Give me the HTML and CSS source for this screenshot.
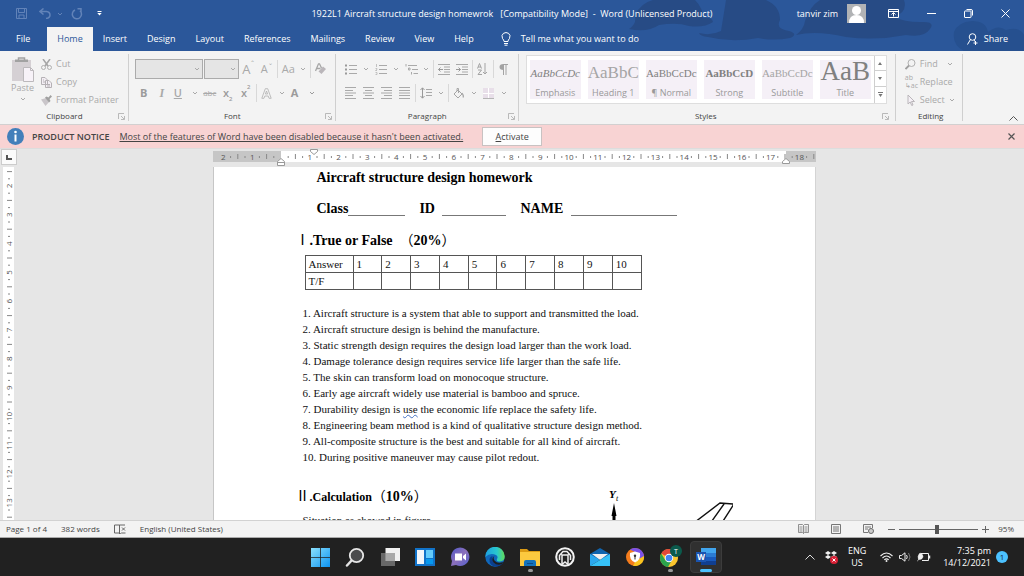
FILE: index.html
```
<!DOCTYPE html>
<html lang="en">

<head>
    <meta charset="utf-8">
    <title>1922L1 Aircraft structure design homewrok - Word</title>
    <link rel="stylesheet" href="styles.css">
</head>

<body>
    <svg class="symbols" aria-hidden="true">
        <symbol id="chev" viewBox="0 0 6 4"><path d="M1 1l2 2 2-2" fill="none" stroke="currentColor" /></symbol>
        <symbol id="launch" viewBox="0 0 7 7"><path d="M.5 6V.5H6M3 3l3 3M6.5 3v3.500H3" fill="none" stroke="currentColor" stroke-width=".8" /></symbol>
    </svg>

    <header class="top">
        <svg class="clouds" viewBox="0 0 400 51" aria-hidden="true">
            <path d="M5 29q8-5 6-14 6-12 18-15h42q8 8 8 18 9-1 10 4-9 6-24 4-12-4-30-1-12 8-30 4zM75 33q12 3 22-2 2-12 5-31h40q14 6 14 20-5 9 9 11 10 3 1 7-16 3-32 0-26 5-50-1-8-1-9-4zM172 35q8-6 9-14 5-15 15-21h84q4 12-10 17 10 5 26 5 16-1 10 7-6 9-24 6-30 6-60 2-30-7-50-2z" fill="#274b85" />
            <path d="M340 51q-12-6-10-19 4-10 18-11 14 0 16 11 10-8 18-2 14-4 18 5v16z" fill="#26508f" />
        </svg>
        <div class="titlebar">
            <div class="quick">
                <button aria-label="Save"><svg width="11" height="11" viewBox="0 0 11 11"><path d="M.5.5h10v10h-10zM2.500.5v4h6v-4M3 10.500V7h5v3.500" fill="none" stroke="currentColor" /></svg></button>
                <button aria-label="Undo"><svg width="12" height="11" viewBox="0 0 12 11"><path d="M4.500.5L1 3.500l3.500 3M1 3.500h6.500q3.500.500 3.500 3.500t-4 3.500" fill="none" stroke="currentColor" stroke-width="1.500" /></svg></button>
                <svg class="chev" width="6" height="4"><use href="#chev" /></svg>
                <button aria-label="Redo"><svg width="12" height="12" viewBox="0 0 12 12"><path d="M4 2a4.600 4.600 0 1 0 5 .8M6.500.8H10v3.500" fill="none" stroke="currentColor" stroke-width="1.500" /></svg></button>
                <button class="customize" aria-label="Customize toolbar"><svg width="5" height="5" viewBox="0 0 5 5"><path d="M.5 0h4v1h-4zM.3 2h4.400L2.500 4.500z" fill="currentColor" /></svg></button>
            </div>
            <h1 class="doc-name">1922L1 Aircraft structure design homewrok &nbsp; [Compatibility Mode] &nbsp;-&nbsp; Word (Unlicensed Product)</h1>
            <div class="account">
                <span>tanvir zim</span>
                <svg class="avatar" width="19" height="19" viewBox="0 0 19 19"><path d="M0 0h19v19H0z" fill="#b1b3b5" /><circle cx="9.500" cy="6.500" r="4.500" fill="#fff" /><path d="M2 19q0-8 7.500-8t7.500 8z" fill="#fff" /></svg>
                <button aria-label="Ribbon display"><svg width="11" height="9" viewBox="0 0 11 9"><path d="M.5.5h10v8H.5zM.5 2.500h10M5.500 7.500V4M3.500 5.500l2-2 2 2" fill="none" stroke="currentColor" /></svg></button>
                <button aria-label="Minimize"><svg width="9" height="9" viewBox="0 0 9 9"><path d="M0 4.500h9" stroke="currentColor" /></svg></button>
                <button aria-label="Restore"><svg width="9" height="9" viewBox="0 0 9 9"><path d="M.5 2.500q0-.5.500-.5h5.500q.5 0 .5.500v5.500q0 .5-.5.500H1q-.5 0-.5-.5zM2.500.5h4.500q1.500 0 1.500 1.500v4.500" fill="none" stroke="currentColor" /></svg></button>
                <button aria-label="Close"><svg width="9" height="9" viewBox="0 0 9 9"><path d="M.5.5l8 8M8.500.5l-8 8" stroke="currentColor" /></svg></button>
            </div>
        </div>
        <nav class="tabs">
            <button>File</button>
            <button class="active">Home</button>
            <button>Insert</button>
            <button>Design</button>
            <button>Layout</button>
            <button>References</button>
            <button>Mailings</button>
            <button>Review</button>
            <button>View</button>
            <button>Help</button>
            <button class="tell"><svg width="10" height="14" viewBox="0 0 10 14"><path d="M3 9.500Q3 8 1.500 6.500 0 3 2.500 1.300 5-.2 7.500 1.300 10 3 8.500 6.500 7 8 7 9.500zM3 11.500h4M3.500 13.200h3" fill="none" stroke="currentColor" /></svg>Tell me what you want to do</button>
            <button class="share"><svg width="11" height="12" viewBox="0 0 11 12"><circle cx="5.500" cy="4" r="3.300" fill="none" stroke="currentColor" /><path d="M3.500 6.500L.5 11.500M7 7l1.500 2M8.500 8v4M6.500 10h4" fill="none" stroke="currentColor" /></svg>Share</button>
        </nav>
    </header>

    <section class="ribbon">
        <div class="group">
            <div class="clipboard">
                <button class="paste">
                    <svg width="23" height="25" viewBox="0 0 23 25"><path d="M1 3h19v21H1z" fill="#d5d0d4" /><path d="M4 2.500h13V5H4z" fill="#a2a2a2" /><path d="M7.500 3V1h6v2" fill="none" stroke="#a2a2a2" stroke-width="1.500" /><path d="M12.500 10.500h7l3 3v11h-10z" fill="#f7f2f8" stroke="#bcb9bc" /><path d="M19.500 10.500v3h3" fill="none" stroke="#bcb9bc" /></svg>
                    Paste
                    <svg class="chev" width="6" height="4"><use href="#chev" /></svg>
                </button>
                <div class="commands">
                    <button><svg width="11" height="11" viewBox="0 0 11 11"><path d="M2 0l5 7M9 0L4 7" stroke="#a6a6a6" stroke-width="1.500" /><circle cx="2.500" cy="8.500" r="2" fill="none" stroke="#b0b0b0" /><circle cx="8.500" cy="8.500" r="2" fill="none" stroke="#b0b0b0" /></svg>Cut</button>
                    <button><svg width="11" height="11" viewBox="0 0 11 11"><path d="M.5.5H4L6.500 3v4.500h-6zM4.500 3.500H8L10.500 6v4.500h-6zM2 3h1M2 5h2M6 7.500h3M6 9h3" fill="#f3eef4" stroke="#b5b1b5" /></svg>Copy</button>
                    <button><svg width="11" height="11" viewBox="0 0 11 11"><path d="M0 4.500L5 3l3 4-3.500 4z" fill="#c9c5c9" /><path d="M4 2.500l4 5 1.500-1.500-1-2L11 1.500 9.500 0 7.500 2.500 5.500 1.500z" fill="#a0a0a0" /></svg>Format Painter</button>
                </div>
            </div>
            <div class="group-name">Clipboard<svg class="launch" width="7" height="7"><use href="#launch" /></svg></div>
        </div>

        <div class="group">
            <div class="rows">
                <div class="row">
                    <span class="combo font-name"><select aria-label="Font"><option></option></select><svg width="6" height="4"><use href="#chev" /></svg></span>
                    <span class="combo font-size"><select aria-label="Font size"><option></option></select><svg width="6" height="4"><use href="#chev" /></svg></span>
                    <button class="tool big" aria-label="Grow font">A<sup>&#8963;</sup></button>
                    <button class="tool" aria-label="Shrink font">A<sup>&#8964;</sup></button>
                    <i class="sep"></i>
                    <button class="tool menu"><span>Aa</span><svg width="6" height="4"><use href="#chev" /></svg></button>
                    <i class="sep"></i>
                    <button class="tool" aria-label="Clear formatting"><svg width="11" height="12" viewBox="0 0 11 12"><path d="M.5 8L3.500.8h1L6.500 5M1.500 5.500h4" fill="none" stroke="#a6a6a6" stroke-width="1.300" /><path d="M3.500 8.500L8 3.500 11 6l-4.500 5z" fill="#bab6ba" /></svg></button>
                </div>
                <div class="row">
                    <button class="tool bold">B</button>
                    <button class="tool italic">I</button>
                    <button class="tool menu under"><span>U</span><svg width="6" height="4"><use href="#chev" /></svg></button>
                    <button class="tool strike">abc</button>
                    <button class="tool script">x<sub>2</sub></button>
                    <button class="tool script">x<sup>2</sup></button>
                    <i class="sep"></i>
                    <button class="tool menu" aria-label="Text effects"><svg width="11" height="11" viewBox="0 0 11 11"><path d="M.8 10.300L4.300.7h2.400l3.500 9.600H8L7.200 8H3.800L3 10.300zM4.400 6h2.200L5.500 3z" fill="#f3f3f3" stroke="#b0b0b0" stroke-width=".8" /></svg><svg width="6" height="4"><use href="#chev" /></svg></button>
                    <button class="tool menu bold"><span>A</span><svg width="6" height="4"><use href="#chev" /></svg></button>
                </div>
            </div>
            <div class="group-name">Font<svg class="launch" width="7" height="7"><use href="#launch" /></svg></div>
        </div>

        <div class="group">
            <div class="rows">
                <div class="row">
                    <button class="tool menu" aria-label="Bullets"><svg width="12" height="11" viewBox="0 0 12 11"><path d="M0 .5h2v2H0zM0 4.500h2v2H0zM0 8.500h2v2H0z" fill="#999" /><path d="M4 1.500h8M4 5.500h8M4 9.500h8" stroke="currentColor" /></svg><svg width="6" height="4"><use href="#chev" /></svg></button>
                    <button class="tool menu" aria-label="Numbering"><svg width="12" height="11" viewBox="0 0 12 11"><path d="M1.500 0v3M.5 4.500H2v1L.5 6.500H2M.5 8.500H2v2H.5" fill="none" stroke="#b5b5b5" stroke-width=".8" /><path d="M4 1.500h8M4 5.500h8M4 9.500h8" stroke="currentColor" /></svg><svg width="6" height="4"><use href="#chev" /></svg></button>
                    <button class="tool menu" aria-label="Multilevel list"><svg width="13" height="11" viewBox="0 0 13 11"><path d="M1 0v2.500M3.500 4H5v2H3.500zM6.500 8v2.500" fill="none" stroke="#aaa" /><path d="M3 1.500h9M7 5.500h6M8.500 9.500H13" stroke="currentColor" /></svg><svg width="6" height="4"><use href="#chev" /></svg></button>
                    <i class="sep"></i>
                    <button class="tool" aria-label="Decrease indent"><svg width="12" height="11" viewBox="0 0 12 11"><path d="M0 .5h12M6 3h6M6 5.500h6M6 8h6M0 10.500h12" stroke="currentColor" /><path d="M5 5.500H.5M2.500 3.500l-2 2 2 2" fill="none" stroke="#999" /></svg></button>
                    <button class="tool" aria-label="Increase indent"><svg width="12" height="11" viewBox="0 0 12 11"><path d="M0 .5h12M6 3h6M6 5.500h6M6 8h6M0 10.500h12" stroke="currentColor" /><path d="M0 5.500h4.500M2.500 3.500l2 2-2 2" fill="none" stroke="#999" /></svg></button>
                    <i class="sep"></i>
                    <button class="tool" aria-label="Sort"><svg width="11" height="12" viewBox="0 0 11 12"><path d="M.5 5.500L2.500.5l2 5M1 4h3M1 7h3.500L1 11.500h4M8 0v11M6 9l2 2 2-2" fill="none" stroke="#a3a3a3" /></svg></button>
                    <i class="sep"></i>
                    <button class="tool" aria-label="Show marks"><svg width="9" height="11" viewBox="0 0 9 11"><path d="M4.500 0H9v1H4.500zM4.500 0v6Q.5 6 .5 3t4-3z" fill="#a3a3a3" /><path d="M4.500 0v11M7 0v11" stroke="#a3a3a3" /></svg></button>
                </div>
                <div class="row">
                    <button class="tool" aria-label="Align left"><svg width="11" height="12" viewBox="0 0 11 12"><path d="M0 .5h11M0 3.500h8M0 6h11M0 8.500h8M0 11.500h11" stroke="currentColor" /></svg></button>
                    <button class="tool" aria-label="Center"><svg width="11" height="12" viewBox="0 0 11 12"><path d="M0 .5h11M2 3.500h7M0 6h11M2 8.500h7M0 11.500h11" stroke="currentColor" /></svg></button>
                    <button class="tool" aria-label="Align right"><svg width="11" height="12" viewBox="0 0 11 12"><path d="M0 .5h11M3 3.500h8M0 6h11M3 8.500h8M0 11.500h11" stroke="currentColor" /></svg></button>
                    <button class="tool" aria-label="Justify"><svg width="11" height="12" viewBox="0 0 11 12"><path d="M0 .5h11M0 3.500h11M0 6h11M0 8.500h11M0 11.500h11" stroke="currentColor" /></svg></button>
                    <i class="sep"></i>
                    <button class="tool menu" aria-label="Line spacing"><svg width="12" height="12" viewBox="0 0 12 12"><path d="M2.500 1v10M.5 3l2-2.200 2 2.200M.5 9l2 2.200 2-2.200" fill="none" stroke="#999" /><path d="M6 2.500h6M6 5.500h6M6 8.500h6" stroke="currentColor" /></svg><svg width="6" height="4"><use href="#chev" /></svg></button>
                    <i class="sep"></i>
                    <button class="tool menu" aria-label="Shading"><svg width="11" height="11" viewBox="0 0 11 11"><path d="M1 6l4-4 4 4-4 4zM4 3V.5h1.500V5" fill="none" stroke="#a6a6a6" /><path d="M9 5q2 3 1 4.500" fill="none" stroke="#a6a6a6" stroke-width="1.300" /></svg><svg width="6" height="4"><use href="#chev" /></svg></button>
                    <button class="tool menu" aria-label="Borders"><svg width="11" height="11" viewBox="0 0 11 11"><path d="M0 0h11v11H0z" fill="#e8dfe9" /><path d="M5.500 0v11M0 5.500h11" stroke="#fff" /><path d="M0 10.500h11" stroke="#b5b5b5" /></svg><svg width="6" height="4"><use href="#chev" /></svg></button>
                </div>
            </div>
            <div class="group-name">Paragraph<svg class="launch" width="7" height="7"><use href="#launch" /></svg></div>
        </div>

        <div class="group styles">
            <div class="gallery">
                <div class="cards">
                    <button><span class="sample emphasis">AaBbCcDc</span>Emphasis</button>
                    <button><span class="sample heading">AaBbC</span>Heading 1</button>
                    <button><span class="sample">AaBbCcDc</span>¶ Normal</button>
                    <button><span class="sample strong">AaBbCcD</span>Strong</button>
                    <button><span class="sample subtitle">AaBbCcDc</span>Subtitle</button>
                    <button><span class="sample title">AaB</span>Title</button>
                </div>
                <div class="scroll">
                    <button aria-label="Previous styles"><svg width="4" height="3" viewBox="0 0 4 3"><path d="M0 3l2-3 2 3z" fill="#777" /></svg></button>
                    <button aria-label="Next styles"><svg width="4" height="3" viewBox="0 0 4 3"><path d="M0 0h4L2 3z" fill="#777" /></svg></button>
                    <button aria-label="More styles"><svg width="5" height="5" viewBox="0 0 5 5"><path d="M0 0h5v1H0zM.5 2h4l-2 3z" fill="#777" /></svg></button>
                </div>
            </div>
            <div class="group-name">Styles<svg class="launch" width="7" height="7"><use href="#launch" /></svg></div>
        </div>

        <div class="group edit-group">
            <div class="commands editing">
                <button><svg width="11" height="11" viewBox="0 0 11 11"><circle cx="6.500" cy="4" r="3.500" fill="none" stroke="#b0b0b0" /><path d="M4 6.500L.5 10" stroke="#a0a0a0" stroke-width="1.800" /></svg>Find<svg class="chev far" width="6" height="4"><use href="#chev" /></svg></button>
                <button><span class="replace-icon">ab<br>&#8627;ac</span>Replace</button>
                <button><svg width="11" height="12" viewBox="0 0 11 12"><path d="M3 1v9l2.200-2 1.500 3.500L8 11 6.500 7.500h3z" fill="#f5f0f6" stroke="#bab6ba" /></svg>Select<svg class="chev" width="6" height="4"><use href="#chev" /></svg></button>
            </div>
            <div class="group-name">Editing</div>
        </div>
        <button class="collapse" aria-label="Collapse ribbon"><svg width="9" height="5" viewBox="0 0 9 5"><path d="M.5 4.500l4-4 4 4" fill="none" stroke="#555" /></svg></button>
    </section>

    <section class="notice">
        <svg width="17" height="17" viewBox="0 0 17 17"><circle cx="8.500" cy="8.500" r="8.500" fill="#437fba" /><circle cx="8.500" cy="4" r="1.300" fill="#fff" /><path d="M7.500 6.500h2v7h-2z" fill="#fff" /></svg>
        <strong>PRODUCT NOTICE</strong>
        <a href="#">Most of the features of Word have been disabled because it hasn't been activated.</a>
        <button class="activate"><u>A</u>ctivate</button>
        <button class="dismiss" aria-label="Close"><svg width="7" height="7" viewBox="0 0 7 7"><path d="M.5.5l6 6M6.500.5l-6 6" stroke="#555" stroke-width="1.200" /></svg></button>
    </section>

    <main class="workspace">
        <div class="side">
            <button class="tab-stop" aria-label="Tab stop"><svg width="6" height="5" viewBox="0 0 6 5"><path d="M1 0v4h5" fill="none" stroke="#555" stroke-width="2" /></svg></button>
            <svg class="v-ruler" id="v-ruler" aria-hidden="true"></svg>
        </div>
        <div class="canvas">
            <svg class="h-ruler" id="h-ruler" aria-hidden="true"></svg>
            <article class="page">
                <h2 class="indent">Aircraft structure design homework</h2>
                <p class="indent fields">
                    <span class="field">Class<i class="blank short"></i></span>
                    <span class="field">ID&nbsp; <i class="blank spaced"></i></span>
                    <span class="field">NAME&nbsp; <i class="blank spaced long"></i></span>
                </p>
                <h2 class="numbered"><span class="cjk">Ⅰ</span>.True or False &nbsp;<span class="cjk">（</span>20%<span class="cjk">）</span></h2>
                <table class="answers">
                    <tr><th>Answer</th><td>1</td><td>2</td><td>3</td><td>4</td><td>5</td><td>6</td><td>7</td><td>8</td><td>9</td><td>10</td></tr>
                    <tr><th>T/F</th><td></td><td></td><td></td><td></td><td></td><td></td><td></td><td></td><td></td><td></td></tr>
                </table>
                <div class="questions">
                    <p>1. Aircraft structure is a system that able to support and transmitted the load.</p>
                    <p>2. Aircraft structure design is behind the manufacture.</p>
                    <p>3. Static strength design requires the design load larger than the work load.</p>
                    <p>4. Damage tolerance design requires service life larger than the safe life.</p>
                    <p>5. The skin can transform load on monocoque structure.</p>
                    <p>6. Early age aircraft widely use material is bamboo and spruce.</p>
                    <p>7. Durability design is <span class="grammar">use</span> the economic life replace the safety life.</p>
                    <p>8. Engineering beam method is a kind of qualitative structure design method.</p>
                    <p>9. All-composite structure is the best and suitable for all kind of aircraft.</p>
                    <p>10. During positive maneuver may cause pilot redout.</p>
                </div>
                <div class="calc">
                    <div>
                        <h2 class="numbered"><span class="cjk">Ⅱ</span><span class="calc-name">.Calculation</span><span class="cjk">（</span>10%<span class="cjk">）</span></h2>
                        <p class="situation">Situation as showed in figure</p>
                    </div>
                    <svg width="125" height="60" viewBox="0 0 125 60">
                        <text x="1" y="10" class="axis">Y</text>
                        <text x="8" y="13" class="axis-sub">t</text>
                        <path d="M6 15l-2.500 13h1v30h3V28h1z" />
                        <path d="M74 44l38-29 14 1-18 28M116 16L94 47" fill="none" stroke="#111" stroke-width="1.400" />
                    </svg>
                </div>
            </article>
        </div>
    </main>

    <footer class="status">
        <span>Page 1 of 4</span>
        <span>382 words</span>
        <svg width="12" height="10" viewBox="0 0 12 10"><path d="M5.500 1v9M5.500 1H.5v8h5l1 .5 1-.5h4M5.500 1H11M8 3.500l3 3M11 3.500l-3 3" fill="none" stroke="#666" /></svg>
        <span>English (United States)</span>
        <div class="views">
            <button aria-label="Read mode"><svg width="11" height="10" viewBox="0 0 11 10"><path d="M.5.5h4l1 1 1-1h4v8h-4l-1 1-1-1h-4zM5.500 1.500v8M1.500 3h3M1.500 5h3M1.500 7h3M6.500 3h3M6.500 5h3M6.500 7h3" fill="none" stroke="#777" stroke-width=".8" /></svg></button>
            <button aria-label="Print layout"><svg width="10" height="10" viewBox="0 0 10 10"><path d="M.5.5h9v9h-9zM2 3h6M2 5h6M2 7h6" fill="none" stroke="#777" /></svg></button>
            <button aria-label="Web layout"><svg width="11" height="10" viewBox="0 0 11 10"><path d="M9.500 4V.5h-9v8H5M2 3h6M2 5h3" fill="none" stroke="#777" /><circle cx="8" cy="7" r="2.500" fill="#ccc" stroke="#666" /></svg></button>
        </div>
        <div class="zoom">
            <button aria-label="Zoom out"><svg width="7" height="7" viewBox="0 0 7 7"><path d="M0 3.500h7" stroke="#666" /></svg></button>
            <input type="range" min="10" max="180" value="90" aria-label="Zoom">
            <button aria-label="Zoom in"><svg width="7" height="7" viewBox="0 0 7 7"><path d="M0 3.500h7M3.500 0v7" stroke="#666" /></svg></button>
            <span>95%</span>
        </div>
    </footer>

    <div class="taskbar">
        <div class="apps">
            <button aria-label="Start"><svg width="20" height="20" viewBox="0 0 20 20"><defs><linearGradient id="win" x2="1" y2="1"><stop stop-color="#8be0fd" /><stop offset="1" stop-color="#0c93f2" /></linearGradient></defs><path d="M1 1h9v9H1zM10.800 1H20v9h-9.200zM1 10.800h9V20H1zM10.800 10.800H20V20h-9.200z" fill="url(#win)" /></svg></button>
            <button aria-label="Search"><svg width="20" height="20" viewBox="0 0 20 20"><path d="M7 13l-5 5.500" stroke="#e3e3e3" stroke-width="2.500" stroke-linecap="round" /><circle cx="11.500" cy="8.500" r="6.700" fill="#4a4b4d" stroke="#e6e6e6" stroke-width="1.800" /></svg></button>
            <button aria-label="Task view"><svg width="20" height="20" viewBox="0 0 20 20"><path d="M5.500 1H20v13H5.500z" fill="#f1f1f1" /><path d="M1 6h14v13H1z" fill="#707070" opacity=".9" /><path d="M5.500 6H15v8H5.500z" fill="#a9a9a9" /></svg></button>
            <button aria-label="Widgets"><svg width="20" height="20" viewBox="0 0 20 20"><path d="M0 1h20v18H0z" fill="#1173c9" /><path d="M2 3h7v14H2z" fill="#f2f6fa" /><path d="M11 3h7v8h-7z" fill="#65ccfa" /><path d="M11 12h7v5h-7z" fill="#0799ee" /></svg></button>
            <button aria-label="Chat"><svg width="20" height="20" viewBox="0 0 20 20"><defs><linearGradient id="chat" x2="1" y2="1"><stop stop-color="#5059c9" /><stop offset=".5" stop-color="#8c70bb" /><stop offset="1" stop-color="#5260d0" /></linearGradient></defs><path d="M1 19l1-5A9.200 9.200 0 1 1 6 18z" fill="url(#chat)" /><path d="M5 6.500h7v7H5zM13 9l3-2.500v7L13 11z" fill="#fff" /></svg></button>
            <button aria-label="Edge"><svg width="20" height="20" viewBox="0 0 20 20"><defs><linearGradient id="edge" x2="1"><stop stop-color="#1d9fe0" /><stop offset=".6" stop-color="#29c8ce" /><stop offset="1" stop-color="#62dc57" /></linearGradient></defs><circle cx="10" cy="10" r="9.700" fill="#1068bb" /><path d="M.3 10A9.700 9.700 0 0 1 19.700 9q.3 5-4.700 5.500-4 0-3-2.500 1.500-2.500-1-4Q5 5.500.3 10z" fill="url(#edge)" /><path d="M7.500 9q-1 7 5 8 4 .3 6-2-3 5-9 4.500Q4 18 4.500 12 5 9.500 7.500 9z" fill="#0b3f8e" /><path d="M10 8.500q-2.500 2-.5 5 3 3.500 8.500 1.500l-1 2q-5 2-8.500-1.500-3-4 1.500-7z" fill="#1c1e20" /></svg></button>
            <button class="open" aria-label="File Explorer"><svg width="20" height="20" viewBox="0 0 20 20"><path d="M0 2h7l2 2h11v6H0z" fill="#dc9b14" /><path d="M0 5h20v14H0z" fill="#fcc93f" /><path d="M4 19v-4q0-2 2-2h8q2 0 2 2v4z" fill="#1473bd" /><path d="M7 16.500h6" stroke="#0c4d8c" /></svg></button>
            <button aria-label="App"><svg width="20" height="20" viewBox="0 0 20 20"><circle cx="10" cy="10" r="8.800" fill="#222" stroke="#f3f3f3" stroke-width="2" /><path d="M4.500 13V8.500L8 4.500h4l3.500 4V13M7 17.500V8h6v9.500L10 15z" fill="none" stroke="#eee" stroke-width="1.500" /></svg></button>
            <button aria-label="Mail"><svg width="20" height="20" viewBox="0 0 20 20"><path d="M0 7l10-6 10 6v5H0z" fill="#1064ae" /><path d="M2 7h16l-8 6z" fill="#f1f1f1" /><path d="M0 7l10 6L0 19z" fill="#2ba8ee" /><path d="M20 7v12H0z" fill="#36c1f7" /></svg></button>
            <button aria-label="Browser"><svg width="20" height="20" viewBox="0 0 20 20"><circle cx="10" cy="10" r="9" fill="#f57c1c" /><path d="M5 2.500A9 9 0 0 1 19 9l-4 3L10 5z" fill="#7b52e8" /><path d="M19 9a9 9 0 0 1-11 9.800l3-5z" fill="#fbc51f" /><path d="M10 4.500l5 1.500q1 7-5 9.500Q4 13 5 6z" fill="#fff" /><circle cx="10" cy="8.800" r="1.200" fill="#333" /><path d="M9.500 9h1v3.500h-1z" fill="#333" /></svg></button>
            <button class="open" aria-label="Chrome"><svg width="24" height="24" viewBox="0 0 24 24"><circle cx="11" cy="13" r="9" fill="#fbc52e" /><path d="M3.200 8.500A9 9 0 0 1 19 9h-8v4z" fill="#e0483b" /><path d="M3.200 8.500L7.500 15.500 14 15l-4 7A9 9 0 0 1 3.200 8.500z" fill="#2ba24c" /><circle cx="11" cy="13" r="4.200" fill="#fff" /><circle cx="11" cy="13" r="3.300" fill="#4285f4" /><circle cx="18" cy="6" r="6" fill="#0b5a4c" /><text x="18" y="9" text-anchor="middle" class="chrome-user">T</text></svg></button>
            <button class="open current" aria-label="Word"><svg width="20" height="18" viewBox="0 0 20 18"><path d="M5 0h15v5H5z" fill="#41a5ee" /><path d="M5 5h15v4H5z" fill="#2b7cd3" /><path d="M5 9h15v4H5z" fill="#185abd" /><path d="M5 13h15v4H5z" fill="#103f91" /><path d="M0 4h10v10H0z" fill="#1a54b0" /><text x="5" y="12" text-anchor="middle" class="word-w">W</text></svg></button>
        </div>
        <div class="tray">
            <svg width="10" height="6" viewBox="0 0 10 6"><path d="M.5 5.500L5 1l4.500 4.500" fill="none" stroke="#ddd" /></svg>
            <svg width="13" height="13" viewBox="0 0 13 13"><path d="M0 2l3-2 3 2-3 2zM6 2l3-2 3 2-3 2zM0 6l3-2 3 2-3 2zM6 6l3-2 3 2-3 2z" fill="#f1f1f1" /><circle cx="9" cy="9" r="4" fill="#d81e34" /><path d="M7.500 7.500l3 3M10.500 7.500l-3 3" stroke="#fff" /></svg>
            <span class="lang">ENG<br>US</span>
            <div class="net">
                <svg width="13" height="10" viewBox="0 0 13 10"><path d="M.5 4Q6.500-2 12.500 4M2.500 6Q6.500 2 10.500 6M4.300 7.800q2.200-2 4.400 0" fill="none" stroke="#eee" stroke-width="1.100" /><circle cx="6.500" cy="9" r="1" fill="#eee" /></svg>
                <svg width="12" height="10" viewBox="0 0 12 10"><path d="M.5 3.500h2L6 .8v8.400L2.500 6.500h-2z" fill="none" stroke="#eee" /><path d="M7.500 3q1.500 2 0 4" fill="none" stroke="#eee" /><path d="M9.500 1q3 4 0 8" fill="none" stroke="#777" /></svg>
                <svg width="14" height="10" viewBox="0 0 14 10"><path d="M4 1.500h7.500v7H5" fill="none" stroke="#eee" /><path d="M12.500 3.500v3" stroke="#eee" stroke-width="1.500" /><path d="M3 1q3 1 3 4-1 3-4.500 2.500Q0 4 3 1zM0 9.500L2 7" fill="#eee" stroke="#eee" stroke-width=".6" /></svg>
            </div>
            <span class="clock">7:35 pm<br>14/12/2021</span>
            <span class="badge">1</span>
        </div>
    </div>

    <script src="script.js"></script>
</body>

</html>
```
FILE: styles.css
```
* {
    box-sizing: border-box;
    margin: 0;
    padding: 0;
}

body {
    display: flex;
    flex-direction: column;
    height: 100vh;
    overflow: hidden;
    font-family: "Open Sans", "Noto Sans", sans-serif;
    font-size: 9px;
    line-height: 12px;
    color: #444;
    background-color: #e6e6e6;
}

button {
    font: inherit;
    color: inherit;
    background: none;
    border: none;
    white-space: nowrap;
}

svg {
    flex: none;
    display: block;
}

.symbols {
    position: absolute;
    width: 0;
    height: 0;
}

/* title bar and tabs */

.top {
    position: relative;
    background-color: #2b579a;
    color: white;
}

.clouds {
    position: absolute;
    right: 0;
    top: 0;
    width: 400px;
    height: 51px;
}

.titlebar,
.tabs {
    position: relative;
    display: flex;
    align-items: center;
}

.titlebar {
    display: grid;
    grid-template-columns: 1fr auto 1fr;
    height: 27px;
}

.quick {
    display: flex;
    align-items: center;
    gap: 12px;
    padding-left: 16px;
    color: #6283b8;
}

.quick .chev {
    margin: 0 -4px 0 -6px;
}

.quick .customize {
    color: white;
    margin-left: 2px;
}

.doc-name {
    font-size: 9px;
    font-weight: 400;
    white-space: nowrap;
}

.account {
    display: flex;
    align-items: center;
    justify-content: flex-end;
    gap: 28px;
    padding-right: 14px;
}

.account span {
    margin-right: -19px;
}

.account .avatar {
    margin-right: -6px;
}

.tabs {
    height: 24px;
}

.tabs button {
    height: 24px;
    padding: 0 10px;
}

.tabs button:first-child {
    padding: 0 17px 0 16px;
}

.tabs .active {
    background-color: #f3f3f3;
    color: #2b579a;
}

.tabs .tell,
.tabs .share {
    display: flex;
    align-items: center;
    gap: 10px;
    padding-left: 17px;
}

.tabs .share {
    gap: 6px;
    margin-left: auto;
    padding-right: 16px;
}

/* ribbon */

.ribbon {
    display: flex;
    height: 74px;
    padding-top: 3px;
    background-color: #f3f3f3;
    border-bottom: 1px solid #d2d0d0;
    color: #a9a9a9;
}

.group {
    display: flex;
    flex-direction: column;
    justify-content: space-between;
    padding: 1px 5px 0 6px;
    margin-bottom: 3px;
    border-right: 1px solid #cfcfcf;
}

.group-name {
    position: relative;
    text-align: center;
    font-size: 8px;
    line-height: 10px;
    color: #444;
}

.launch {
    position: absolute;
    right: -2px;
    top: 2px;
    color: #aaa;
}

.clipboard {
    display: flex;
    gap: 7px;
    padding-right: 4px;
}

.paste {
    display: flex;
    flex-direction: column;
    align-items: center;
    padding: 2px 0 0 5px;
}

.paste .chev {
    margin-top: 3px;
}

.commands {
    display: flex;
    flex-direction: column;
}

.commands button {
    display: flex;
    align-items: center;
    gap: 4px;
    height: 18px;
}

.commands .far {
    margin-left: 5px;
}

.styles {
    padding-right: 8px;
}

.edit-group {
    padding-right: 2px;
}

.editing {
    padding: 0 5px 0 3px;
}

.replace-icon {
    width: 11px;
    font-size: 7px;
    line-height: 8px;
    text-align: left;
}

.rows {
    display: flex;
    flex-direction: column;
    gap: 4px;
    padding-top: 4px;
}

.row {
    display: flex;
    align-items: center;
    height: 20px;
}

.combo {
    display: flex;
    align-items: center;
    justify-content: flex-end;
    position: relative;
    height: 20px;
    margin-right: 1px;
    background-color: #e5e5e5;
    border: 1px solid #ababab;
}

.combo select {
    width: 100%;
    height: 100%;
    appearance: none;
    background: none;
    border: none;
}

.combo svg {
    position: absolute;
    right: 2px;
}

.font-name {
    width: 68px;
}

.font-size {
    width: 35px;
}

.tool {
    display: flex;
    align-items: center;
    justify-content: center;
    width: 18px;
    height: 18px;
    font-size: 11px;
}

.tool.menu {
    justify-content: space-between;
    width: 30px;
    padding: 0 3px;
}

.tool.big {
    font-size: 13px;
}

.tool sup,
.tool sub {
    font-size: 6px;
    line-height: 6px;
}

.tool sup {
    align-self: flex-start;
}

.tool sub {
    align-self: flex-end;
}

.bold,
.script {
    font-weight: 700;
    color: #9b9b9b;
}

.script {
    font-weight: 600;
}

.italic {
    font-family: "Liberation Serif", serif;
    font-style: italic;
    font-weight: 700;
    font-size: 12px;
}

.under span {
    font-weight: 600;
    text-decoration: underline;
}

.strike {
    font-size: 8px;
    text-decoration: line-through;
}

.sep {
    width: 1px;
    height: 18px;
    margin: 0 1px;
    background-color: #d8d8d8;
}

.gallery {
    display: flex;
    height: 49px;
    margin-left: 1px;
    background-color: white;
    border: 1px solid #dedede;
}

.cards {
    display: grid;
    grid-template-columns: repeat(6, 51px);
    gap: 7px;
    padding: 4px 3px;
}

.cards button {
    display: flex;
    flex-direction: column;
    align-items: center;
    justify-content: space-between;
    background-color: #f5f0f7;
    color: #999;
}

.sample {
    height: 26px;
    line-height: 26px;
    font-family: "Liberation Serif", serif;
    font-size: 11px;
    color: #808080;
}

.emphasis {
    font-style: italic;
}

.heading {
    font-size: 17px;
    color: #a5a5a5;
}

.strong {
    font-weight: 700;
}

.subtitle {
    color: #a5a5a5;
}

.title {
    font-size: 27px;
    line-height: 22px;
}

.scroll {
    display: grid;
    width: 12px;
    border-left: 1px solid #cfcfcf;
}

.scroll button {
    display: flex;
    align-items: center;
    justify-content: center;
}

.scroll button + button {
    border-top: 1px solid #cfcfcf;
}

.collapse {
    align-self: flex-end;
    margin-left: auto;
    padding: 0 6px 3px;
}

/* product notice */

.notice {
    display: flex;
    align-items: center;
    height: 23px;
    padding: 0 9px 0 7px;
    background-color: #f8d3d3;
}

.notice strong {
    margin: 0 10px 0 8px;
    font-weight: 600;
}

.notice a {
    color: #444;
}

.activate {
    width: 60px;
    height: 19px;
    margin-left: 19px;
    background-color: #fdfdfd;
    border: 1px solid #c8c2c2;
}

.dismiss {
    margin-left: auto;
}

/* document area */

.workspace {
    display: flex;
    flex: 1;
    min-height: 0;
    border-top: 1px solid #ddd;
}

.side {
    display: flex;
    flex-direction: column;
    width: 17px;
}

.tab-stop {
    display: flex;
    align-items: center;
    justify-content: center;
    width: 16px;
    height: 16px;
    margin: 0 0 2px 1px;
    background-color: #fbfbfb;
    border: 1px solid #ccc;
}

.v-ruler {
    width: 11px;
    flex: 1;
    min-height: 0;
    margin-left: 3px;
    background-color: white;
}

.canvas {
    flex: 1;
    overflow: hidden;
    padding-right: 13px;
}

.h-ruler {
    width: 603px;
    height: 18px;
    margin: 0 auto;
}

.ruler-text {
    font-size: 8px;
    fill: #555;
    text-anchor: middle;
}

.page {
    width: 603px;
    height: 900px;
    margin: 0 auto;
    padding: 3px 68px 0 87px;
    background-color: white;
    border-left: 1px solid #c6c6c6;
    border-right: 1px solid #d4d4d4;
    font-family: "Liberation Serif", serif;
    font-size: 11px;
    line-height: 16px;
    color: #111;
}

.page h2,
.fields {
    font-size: 14px;
    font-weight: 700;
    line-height: 16px;
    margin-bottom: 15px;
    color: black;
    white-space: nowrap;
}

.page .indent {
    margin-left: 16px;
}

.page .numbered {
    margin-left: -5px;
}

.fields {
    display: flex;
    gap: 14px;
}

.field {
    display: flex;
}

.blank {
    width: 64px;
    height: 15px;
    border-bottom: 1px solid #777;
}

.blank.spaced {
    margin-left: 4px;
}

.blank.short {
    width: 57px;
}

.blank.long {
    width: 106px;
}

.page .cjk {
    font-family: "Noto Sans CJK SC", sans-serif;
    font-weight: 400;
    line-height: 14px;
}

.answers {
    width: 337px;
    margin: -9px 0 15px 4px;
    table-layout: fixed;
    border-collapse: collapse;
    font-size: 11px;
}

.answers th,
.answers td {
    height: 17px;
    padding: 0 3px;
    border: 1px solid #555;
    font-weight: 400;
    text-align: left;
}

.answers th {
    width: 48px;
}

.questions {
    margin: 0 0 23px 2px;
}

.grammar {
    text-decoration: underline wavy #4472c4 1px;
}

.calc {
    display: flex;
    justify-content: space-between;
    padding-right: 14px;
}

.calc h2 {
    margin-bottom: 7px;
}

.calc-name {
    font-size: 12px;
}

.situation {
    margin-left: 2px;
}

.axis {
    font-size: 11px;
    font-style: italic;
    font-weight: 700;
}

.axis-sub {
    font-size: 8px;
    font-style: italic;
}

/* status bar */

.status {
    display: flex;
    align-items: center;
    gap: 14px;
    height: 18px;
    padding: 0 10px 0 6px;
    background-color: #f3f3f3;
    border-top: 1px solid #d2d2d2;
    border-bottom: 1px solid #aaa;
    font-size: 8px;
}

.views {
    display: flex;
    gap: 22px;
    margin-left: auto;
}

.zoom {
    display: flex;
    align-items: center;
    gap: 4px;
}

.zoom span {
    margin-left: 5px;
}

.zoom input {
    width: 79px;
    height: 9px;
    appearance: none;
    background: linear-gradient(#666, #666) center / 100% 1px no-repeat;
}

.zoom input::-webkit-slider-thumb {
    appearance: none;
    width: 4px;
    height: 9px;
    background-color: #555;
}

/* taskbar */

.taskbar {
    display: grid;
    grid-template-columns: 1fr auto 1fr;
    align-items: center;
    height: 38px;
    background-color: #212121;
    color: white;
}

.apps {
    grid-column: 2;
    display: flex;
}

.apps button {
    position: relative;
    display: flex;
    align-items: center;
    justify-content: center;
    width: 35px;
    height: 32px;
}

.apps .open::after {
    content: "";
    position: absolute;
    bottom: 1px;
    width: 5px;
    height: 3px;
    border-radius: 2px;
    background-color: #999;
}

.apps .current {
    width: 32px;
    margin-left: 2px;
    background-color: #303030;
    border: 1px solid #3c3c3c;
    border-radius: 4px;
}

.apps .current::after {
    width: 12px;
    bottom: 0;
    background-color: #4cc2ff;
}

.chrome-user {
    font-size: 7px;
    fill: white;
}

.word-w {
    font-size: 8px;
    font-weight: 700;
    fill: white;
}

.tray {
    display: flex;
    align-items: center;
    justify-content: flex-end;
    gap: 10px;
    padding-right: 16px;
}

.net {
    display: flex;
    gap: 6px;
    margin: 0 2px 0 4px;
}

.lang {
    text-align: center;
}

.clock {
    text-align: right;
    white-space: nowrap;
}

.badge {
    width: 12px;
    height: 12px;
    margin-left: -5px;
    border-radius: 50%;
    background-color: #4cc2ff;
    color: #123;
    font-size: 8px;
    text-align: center;
}
```
FILE: script.js
```
const hRuler = document.getElementById("h-ruler");
const vRuler = document.getElementById("v-ruler");

// one centimetre of paper at 95% zoom
const cm = 28.8;

// page margins on the horizontal ruler
const zero = 68;
const rightMargin = 573;

function drawRuler() {
    let across = `<rect y="2" width="603" height="11" fill="#c6c6c6" />
        <rect x="${zero}" y="2" width="${rightMargin - zero}" height="11" fill="#fff" />`;

    for (let i = -2; i <= 18; i++) {
        const x = zero + i * cm;
        if (i !== 0) {
            across += `<text class="ruler-text" x="${x}" y="11">${Math.abs(i)}</text>`;
        }
        across += `<path d="M${x + cm / 4} 7v2M${x + cm / 2} 5v5M${x + cm * 3 / 4} 7v2" stroke="#888" />`;
    }

    // indent markers
    across += `<path d="M97.500.5h7v2l-3.500 3-3.500-3z" fill="#fff" stroke="#999" />
        <path d="M64.500 16.500v-4l3.500-3 3.500 3v4zM64.500 13.500h7" fill="#fff" stroke="#999" />
        <path d="M569.500 14.500v-2l3.500-3 3.500 3v2z" fill="#fff" stroke="#999" />`;
    hRuler.innerHTML = across;

    let down = "";
    for (let i = 1; i <= 13; i++) {
        const y = 19 + (i - 2) * cm;
        if (i > 1) {
            down += `<text class="ruler-text" transform="translate(9 ${y}) rotate(-90)">${i}</text>`;
        }
        down += `<path d="M5 ${y + cm / 4}h2M4 ${y + cm / 2}h5M5 ${y + cm * 3 / 4}h2" stroke="#888" />`;
    }
    vRuler.innerHTML = down;
}

drawRuler();
```
